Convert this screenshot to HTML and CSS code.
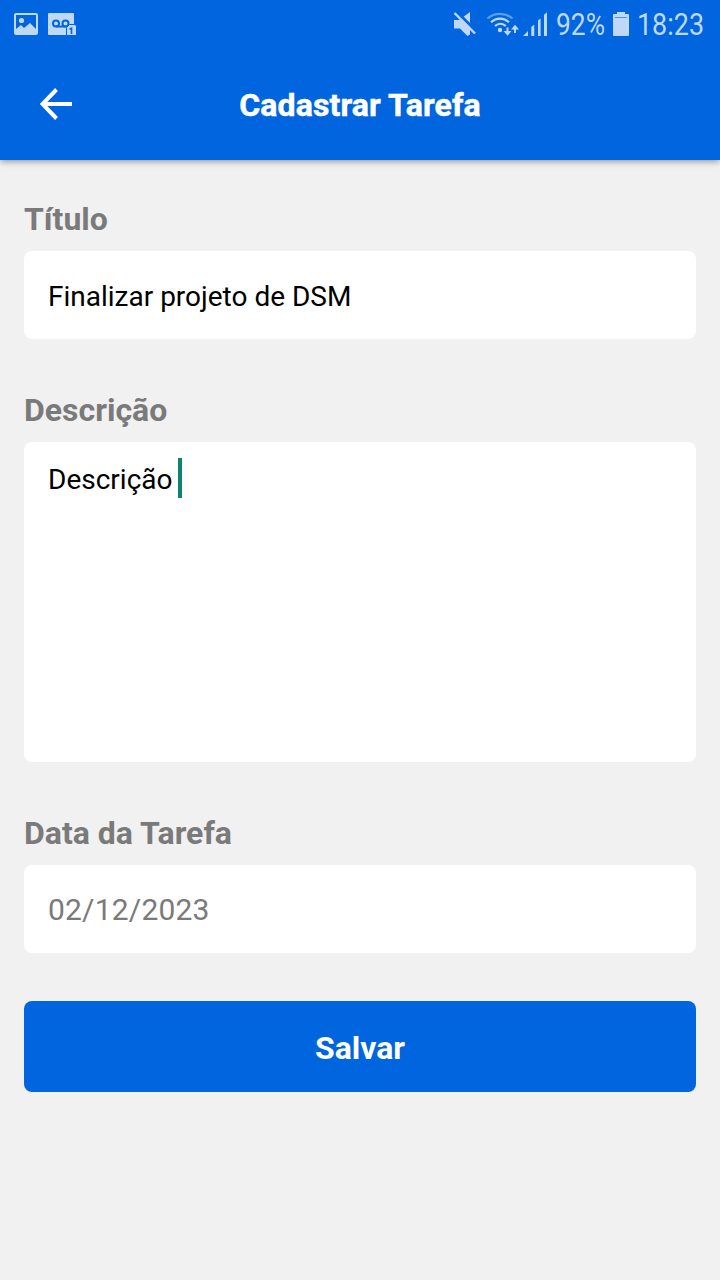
FILE: index.html
```html
<!DOCTYPE html>
<html lang="pt-BR">
<head>
<meta charset="utf-8">
<title>Cadastrar Tarefa</title>
<link rel="stylesheet" href="styles.css">
</head>
<body>
<header class="header">
  <div class="status">
    <svg class="status-icons" width="80" height="48" viewBox="0 0 80 48">
      <path fill="#bfd8f6" fill-rule="evenodd" d="M16 13h20a2 2 0 0 1 2 2v18a2 2 0 0 1-2 2H16a2 2 0 0 1-2-2V15a2 2 0 0 1 2-2zM16 15v14l5-4 3 3 6-5 6 6V15z"/>
      <circle cx="21.5" cy="20.5" r="2.6" fill="#bfd8f6"/>
      <path fill="#bfd8f6" d="M49 13h24a1 1 0 0 1 1 1v10h-5l-3 3v8H49a1 1 0 0 1-1-1V14a1 1 0 0 1 1-1z"/>
      <g fill="none" stroke="#0065de" stroke-width="2"><circle cx="56" cy="23.5" r="3"/><circle cx="65.500" cy="23.500" r="3"/><path d="M56 26.500h10"/></g>
      <path fill="#bfd8f6" stroke="#0065de" stroke-width="1" d="M69.500 24.500h5a2 2 0 0 1 2 2V35.500h-10V27.500z"/>
      <path fill="none" stroke="#0065de" stroke-width="1.600" d="M69.500 29.300l2-1v5.700"/>
    </svg>
    <svg class="status-icons" width="270" height="48" viewBox="450 0 270 48">
      <path fill="#bfd8f6" d="M454 20h5l11-8v22.500L467.500 36l-7.500-7.500H454z"/>
      <path d="M456 11l22 22" stroke="#0065de" stroke-width="3"/>
      <path d="M454.500 13l20.500 20.500" stroke="#bfd8f6" stroke-width="2.400"/>
      <g fill="none" stroke="#bfd8f6" stroke-width="2.200">
        <path stroke="#5c9dea" d="M487.500 18.500c7-6.300 18-6.300 25 0"/>
        <path d="M491 22.300c5.500-5 12.500-5 18 0M495 26c3.300-3 7.500-3 10.800 0"/>
        <path stroke-width="2" d="M507.500 27.500v6M515 33v-6"/>
      </g>
      <circle cx="500" cy="30" r="2.200" fill="#bfd8f6"/>
      <path fill="#bfd8f6" d="M503.500 31h8l-4 4.800zM511 29.500h8L515 24.800z"/>
      <path fill="#bfd8f6" d="M523 36l5-5v5zM531.300 26.700l3-2V36h-3zM538 20.500l2.600-2V36H538zM544 14.700l3-2.500V36h-3z"/>
      <text class="status-text" x="556" y="35" textLength="49" lengthAdjust="spacingAndGlyphs">92%</text>
      <path fill="#bfd8f6" d="M617 12h8v2h3a1 1 0 0 1 1 1v20a1 1 0 0 1-1 1h-14a1 1 0 0 1-1-1V15a1 1 0 0 1 1-1h3z"/>
      <path stroke="#4d94e8" d="M615 17.500h12"/>
      <text class="status-text" x="637" y="35" textLength="67" lengthAdjust="spacingAndGlyphs">18:23</text>
    </svg>
  </div>
  <div class="nav">
    <svg class="back" width="32" height="32" viewBox="0 0 32 32"><path d="M16.500 1.500L2.500 16L16.500 30.500M2.500 16H32" fill="none" stroke="#fff" stroke-width="4"/></svg>
    <h1 class="title">Cadastrar Tarefa</h1>
  </div>
</header>
<main class="form">
  <section class="field">
    <h2 class="label">Título</h2>
    <div class="input">Finalizar projeto de DSM</div>
  </section>
  <section class="field">
    <h2 class="label">Descrição</h2>
    <div class="input area">Descrição<span class="caret"></span></div>
  </section>
  <section class="field">
    <h2 class="label">Data da Tarefa</h2>
    <div class="input date">02/12/2023</div>
  </section>
  <button class="save" type="button">Salvar</button>
</main>
</body>
</html>
```
FILE: styles.css
```css
* { box-sizing: border-box; }
body {
  margin: 0;
  min-height: 1280px;
  background: #f1f1f1;
  font-family: Roboto, sans-serif;
}
.header {
  height: 160px;
  background: #0065de;
  box-shadow: 0 1px 7px rgba(0, 0, 0, .45);
}
.status {
  height: 48px;
  display: flex;
  justify-content: space-between;
}
.status-icons { display: block; }
.status-text {
  font-size: 31px;
  fill: #bfd8f6;
}
.nav {
  height: 112px;
  padding: 0 40px;
  display: grid;
  grid-template-columns: 32px 1fr 32px;
  align-items: center;
}
.back { display: block; }
.title {
  margin: 2px 0 0;
  text-align: center;
  color: #fff;
  font-size: 32px;
  font-weight: 700;
  line-height: 38px;
  letter-spacing: .12px;
  -webkit-text-stroke: .5px #fff;
}
.form { padding: 40px 24px 0; }
.field { margin-bottom: 52px; }
.label {
  margin: 0 0 13px;
  color: #7a7a7a;
  font-size: 32px;
  font-weight: 700;
  line-height: 38px;
}
.input {
  height: 88px;
  padding: 4px 24px 0;
  display: flex;
  align-items: center;
  background: #fff;
  border-radius: 8px;
  color: #000;
  font-size: 28px;
  line-height: 34px;
}
.area {
  height: 320px;
  align-items: flex-start;
  padding-top: 16px;
  line-height: 44px;
}
.caret {
  width: 4px;
  height: 40px;
  margin-left: 6px;
  background: #0a8570;
}
.date {
  padding-top: 2px;
  color: #7a7a7a;
  font-size: 30px;
  letter-spacing: .2px;
}
.save {
  display: block;
  width: 100%;
  height: 91px;
  margin-top: -4px;
  padding: 2px 0 0;
  border: 0;
  border-radius: 8px;
  background: #0065de;
  color: #fff;
  font: 700 32px/38px Roboto, sans-serif;
}
```
